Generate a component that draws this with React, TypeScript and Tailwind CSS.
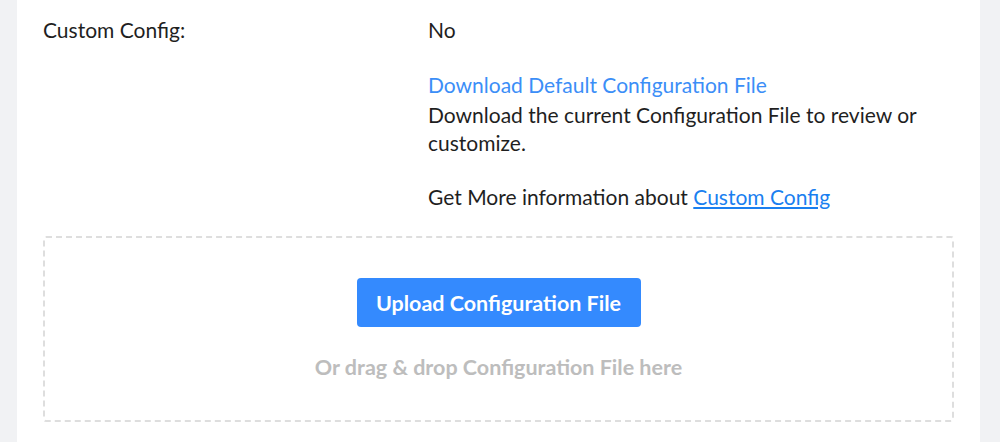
import React from "react";

export default function App() {
  return (
    <div
      className="flex h-[442px] w-[1000px] overflow-hidden bg-[#f1f2f4]"
      style={{ fontFamily: '"Lato", "Noto Sans", sans-serif' }}
    >
      <div className="w-[17px] shrink-0" />
      <div className="w-[963px] shrink-0 bg-white px-[26px] pt-[16px] text-[21px] leading-[28px] text-[#1f1f1f]">
        <div className="flex">
          <div className="w-[385px] shrink-0">Custom Config:</div>
          <div className="flex flex-col">
            <div>No</div>
            <a className="mt-[27px] text-[#3b8ef7]" href="#">
              Download Default Configuration File
            </a>
            <div className="mt-[2px] w-[500px]">
              Download the current Configuration File to review or customize.
            </div>
            <div className="mt-[26px]">
              Get More information about{" "}
              <a className="text-[#1a7ff0] underline" href="#">
                Custom Config
              </a>
            </div>
          </div>
        </div>
        <div className="mt-[25px] flex h-[186px] flex-col items-center rounded-[3px] border-2 border-dashed border-[#dedede]">
          <button className="mt-[40px] h-[49px] w-[284px] rounded-[4px] bg-[#348afe] text-[21.5px] font-bold text-white">
            Upload Configuration File
          </button>
          <div className="mt-[26px] text-[21.5px] font-bold text-[#bdbdbd]">
            Or drag &amp; drop Configuration File here
          </div>
        </div>
      </div>
    </div>
  );
}
